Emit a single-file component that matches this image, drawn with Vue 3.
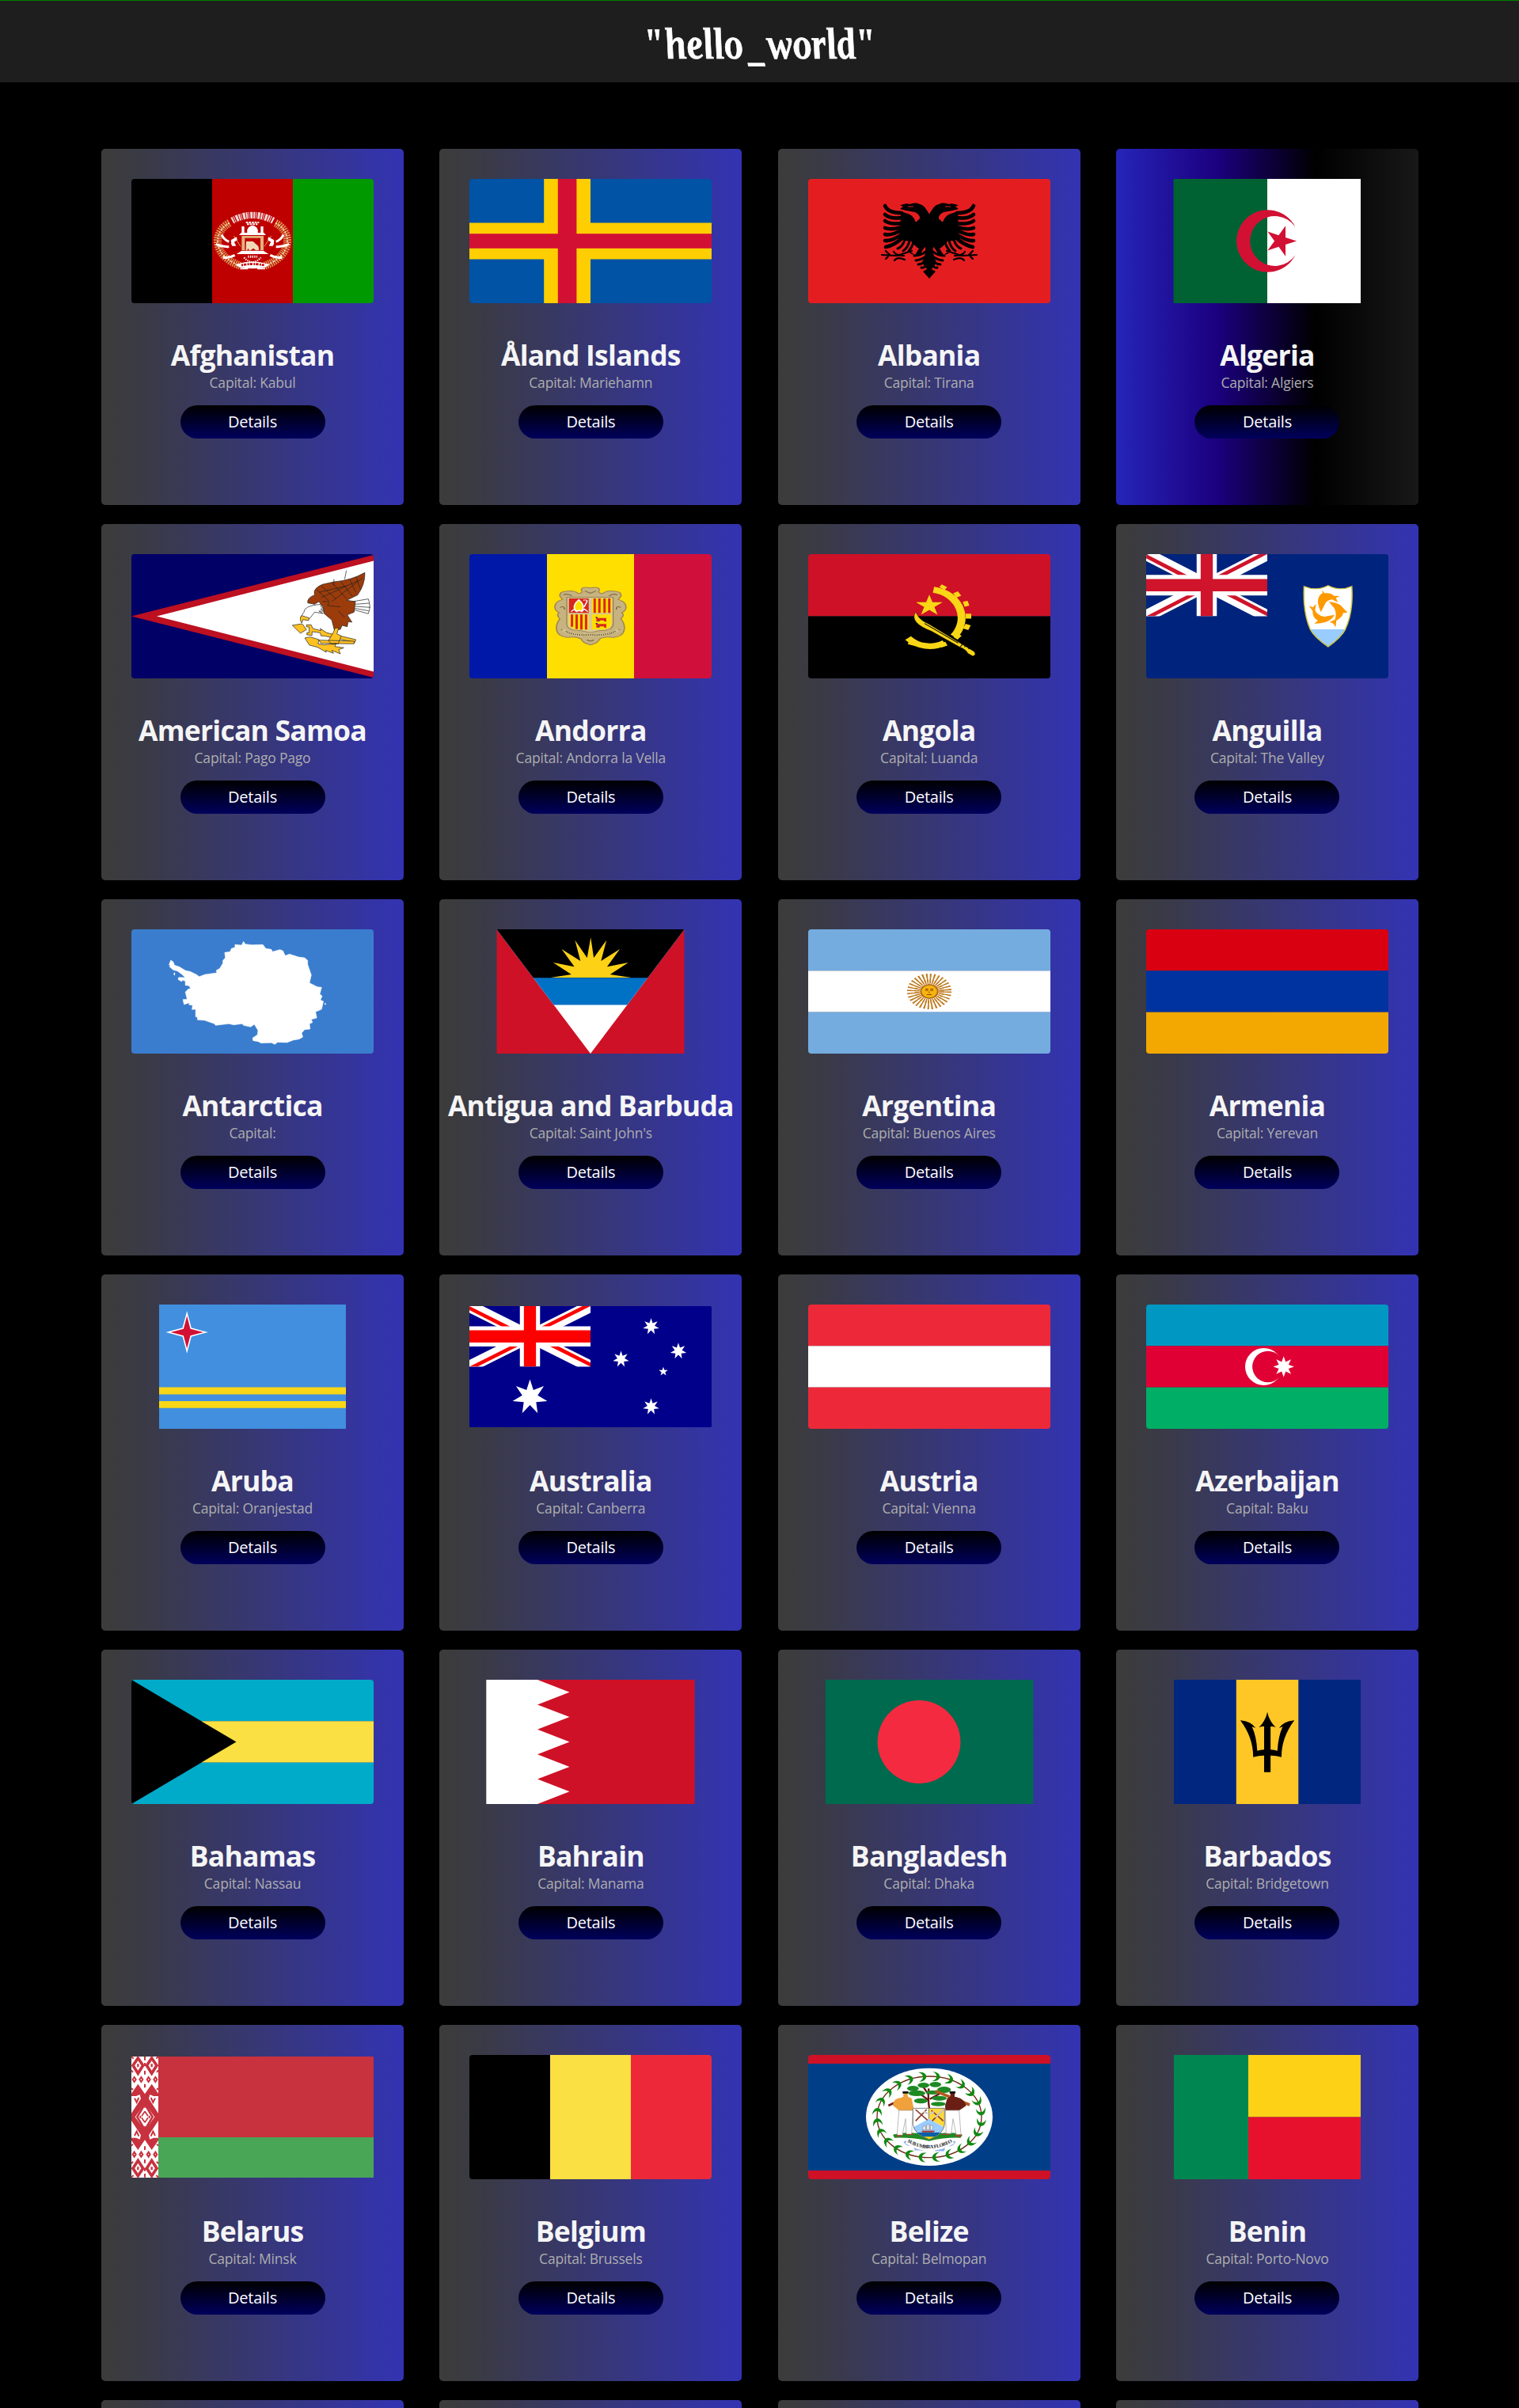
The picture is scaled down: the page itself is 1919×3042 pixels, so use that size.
<script setup>
const stripes = (dir, ...colors) => {
  const n = colors.length
  return colors.map((c, i) =>
    dir === 'v'
      ? { x: (306 / n) * i, y: 0, w: 306 / n, h: 157, c }
      : { x: 0, y: (157 / n) * i, w: 306, h: 157 / n, c }
  )
}

const star = (cx, cy, n, R, r, rot = -90, sx = 1) => {
  const pts = []
  for (let i = 0; i < n * 2; i++) {
    const a = ((rot + (i * 180) / n) * Math.PI) / 180
    const k = i % 2 ? r : R
    pts.push(`${(cx + Math.cos(a) * k * sx).toFixed(2)},${(cy + Math.sin(a) * k).toFixed(2)}`)
  }
  return pts.join(' ')
}

const zigzag = () => {
  let d = 'M86 0'
  for (let i = 1; i <= 10; i++) d += `L${i % 2 ? 126.5 : 86} ${(i * 15.7).toFixed(1)}`
  return d + 'H284.6V0Z'
}

const leaves = Array.from({ length: 24 }, (_, i) => {
  const a = ((i + 0.5) / 24) * Math.PI * 2
  return {
    x: 522 + 198 * Math.cos(a),
    y: 283 + 154 * Math.sin(a),
    r: (Math.atan2(154 * Math.cos(a), -198 * Math.sin(a)) * 180) / Math.PI
  }
})

const southernCross = [
  star(76.5, 117, 7, 22.5, 10),
  star(229.5, 27.7, 7, 10.5, 4.7),
  star(264, 58.7, 7, 10.5, 4.7),
  star(191.5, 69, 7, 10.5, 4.7),
  star(229.5, 129, 7, 10.5, 4.7),
  star(245, 84.7, 5, 6, 2.4)
]

const countries = [
  { name: 'Afghanistan', capital: 'Kabul', bars: stripes('v', '#000', '#bf0000', '#009900') },
  { name: 'Åland Islands', capital: 'Mariehamn', bars: stripes('h', '#0053a5') },
  { name: 'Albania', capital: 'Tirana', bars: stripes('h', '#e41e20') },
  { name: 'Algeria', capital: 'Algiers', active: true },
  { name: 'American Samoa', capital: 'Pago Pago', bars: stripes('h', '#000066') },
  {
    name: 'Andorra',
    capital: 'Andorra la Vella',
    bars: [
      { x: 0, y: 0, w: 98, h: 157, c: '#0018a8' },
      { x: 98, y: 0, w: 110, h: 157, c: '#ffdf00' },
      { x: 208, y: 0, w: 98, h: 157, c: '#d0103a' }
    ]
  },
  { name: 'Angola', capital: 'Luanda', bars: stripes('h', '#ce1126', '#000') },
  { name: 'Anguilla', capital: 'The Valley', bars: stripes('h', '#00247d') },
  { name: 'Antarctica', capital: '', bars: stripes('h', '#3a7dce') },
  { name: 'Antigua and Barbuda', capital: "Saint John's" },
  { name: 'Argentina', capital: 'Buenos Aires', bars: stripes('h', '#74acdf', '#fff', '#74acdf') },
  { name: 'Armenia', capital: 'Yerevan', bars: stripes('h', '#d90012', '#0033a0', '#f2a800') },
  { name: 'Aruba', capital: 'Oranjestad' },
  { name: 'Australia', capital: 'Canberra' },
  { name: 'Austria', capital: 'Vienna', bars: stripes('h', '#ed2939', '#fff', '#ed2939') },
  { name: 'Azerbaijan', capital: 'Baku', bars: stripes('h', '#0098c3', '#e00034', '#00ae65') },
  { name: 'Bahamas', capital: 'Nassau', bars: stripes('h', '#00abc9', '#fae042', '#00abc9') },
  { name: 'Bahrain', capital: 'Manama' },
  { name: 'Bangladesh', capital: 'Dhaka' },
  { name: 'Barbados', capital: 'Bridgetown' },
  { name: 'Belarus', capital: 'Minsk' },
  { name: 'Belgium', capital: 'Brussels', bars: stripes('v', '#000', '#fae042', '#ed2939') },
  { name: 'Belize', capital: 'Belmopan', bars: stripes('h', '#003f87') },
  { name: 'Benin', capital: 'Porto-Novo' }
]
</script>

<template>
  <div class="page">
    <header class="topbar">
      <h1 class="logo">"hello<span class="dash">_</span>world"</h1>
    </header>

    <main class="grid">
      <article v-for="c in countries" :key="c.name" class="card" :class="{ active: c.active }">
        <svg class="flag" viewBox="0 0 306 157" width="306" height="157">
          <rect v-for="(b, i) in c.bars" :key="i" :x="b.x" :y="b.y" :width="b.w" :height="b.h" :fill="b.c" />

          <g v-if="c.name === 'Afghanistan'" transform="scale(.33333) translate(-168 -168)">
            <g fill="none">
              <path d="M540 335C480 365 468 455 580 497M714 335C774 365 786 455 674 497" stroke="#d9924f" stroke-width="30" stroke-dasharray="5 3" />
              <path d="M540 335C480 365 468 455 580 497M714 335C774 365 786 455 674 497" stroke="#f4dcc0" stroke-width="5" stroke-dasharray="7 5" />
              <path d="M550 326Q627 285 706 326" stroke="#fff" stroke-width="25" stroke-dasharray="6 3 3 4 9 3" opacity=".85" />
              <path d="M602 333h50M606 340h40" stroke="#fff" stroke-width="6" stroke-dasharray="8 3" />
              <path d="M510 380q10 20 28 26M488 415q25 12 50 10M515 465q20 5 45-8M744 380q-10 20-28 26M766 415q-25 12-50 10M739 465q-20 5-45-8" stroke="#fff" stroke-width="9" />
              <path d="M556 384l26 40M698 384l-26 40" stroke="#e0a060" stroke-width="3" />
              <path d="M595 466q15 16 32 18q17-2 32-18" stroke="#fff" stroke-width="7" stroke-dasharray="4 4" />
              <path d="M610 463h35" stroke="#fff" stroke-width="9" stroke-dasharray="4 4" />
            </g>
            <g fill="#fff">
              <path d="M545 400l22-12 2 12-22 14zM545 412l12-6 8 16h-15zM709 400l-22-12-2 12 22 14zM709 412l-12-6-8 16h15z" />
              <path d="M586 348h10v28h-10zM658 348h10v28h-10zM584 372h86l8 9h-102z" />
              <path d="M607 372q-4-22 20-28q24 6 20 28z" />
              <path d="M566 453l20-13h82l20 13z" />
              <path d="M562 494q65-25 130 0l-18 10q-47 8-94 0z" />
              <path d="M580 508h30M645 508h30" stroke="#fff" stroke-width="5" />
            </g>
            <path d="M586 384h12v54h-12zM657 384h12v54h-12zM598 384h59v8h-59z" fill="#e3b27c" />
            <path d="M603 405h26l20 18 3 14-12 2-10-8-10 8h-6l-3-8-4 8h-5z" fill="#f1d9b5" />
            <path d="M585 495q42-9 86 0" fill="none" stroke="#bf0000" stroke-width="8" stroke-dasharray="6 3 10 4" />
          </g>

          <g v-else-if="c.name === 'Åland Islands'">
            <path d="M94.2 0H153V55.4H306V101.6H153V157H94.2V101.6H0V55.4H94.2Z" fill="#ffce00" />
            <path d="M111.8 0H135.4V69.3H306V87.7H135.4V157H111.8V87.7H0V69.3H111.8Z" fill="#d21034" />
          </g>

          <g v-else-if="c.name === 'Albania'">
            <g v-for="m in [1, -1]" :key="m" :transform="m < 0 ? 'translate(306 0) scale(-1 1)' : ''">
              <path d="M153.3 45C150 40 147 33 141 32C135 29 131 31 128 32C124 30 120 33 116 33L120 35L116 38L124 40C128 41 131 41 135 42C141 45 143 50 139 52L136 54C133 49 132 46 126 44L117 41L116 72C118 77 122 79 129 78C133 82 136 86 140 88L135 96L126 90L130 95L142 97C143 92 146 87 148 86C149 94 146 100 144 106L150 114L145 117L153.3 126Z" fill="#000" />
              <g stroke="#000" fill="none" stroke-linecap="round" stroke-width="4.6">
                <path d="M97 34Q101 43 118 43M97 45Q104 51 118 49M97 53Q104 58 118 56M97 62Q104 65 118 61M97 70Q104 72 118 65M97 78Q106 79 120 69M98 86Q109 84 121 73" />
                <path d="M113 88Q119 86 122 77M120 91Q126 87 128 78M127 91Q131 87 133 80" stroke-width="3" />
                <path d="M148 92Q143 97 134 97M147 99Q143 102 136 103M147 105Q143 108 139 108M148 110Q146 113 143 112" stroke-width="3" />
                <path d="M93 96L112 97L131 91M98 91L103 96L98 101M108 92Q111 97 121 97M109 103Q113 98 122 102" stroke-width="2.2" />
              </g>
              <path d="M126 35h7" stroke="#e41e20" stroke-width="1" />
              <path d="M131 44.5C136 45 139 48 136.5 52.5" stroke="#e41e20" stroke-width="3" stroke-linecap="round" fill="none" />
            </g>
          </g>

          <g v-else-if="c.name === 'Algeria'">
            <path d="M34.5 0H153V157H34.5Z" fill="#006233" />
            <path d="M153 0H271V157H153Z" fill="#fff" />
            <path d="M188.3 96.5A39.25 39.25 0 1 1 188.3 60.5A31.4 31.4 0 1 0 188.3 96.5Z" fill="#d21034" />
            <polygon :points="star(169.8, 78.5, 5, 20.3, 7.7, 0)" fill="#d21034" />
          </g>

          <g v-else-if="c.name === 'American Samoa'">
            <path d="M0 78.5L306 1V156Z" fill="#bd1021" />
            <path d="M32 78.5L306 8.5V148.5Z" fill="#fff" />
            <g transform="scale(.5421 .33333) translate(-103 -60)" stroke="#222" stroke-width="1.6" stroke-linejoin="round">
              <path d="M618 240L655 230Q662 258 655 286L620 270M624 250L658 246M624 258L660 262M622 265L656 275" fill="#fff" />
              <path d="M647 130Q648 175 630 215L605 235L625 240L622 280L606 290L617 318L608 316L606 335L594 330L590 345L576 348L570 310L552 285L550 262L540 240L530 250L514 245Q512 225 530 215Q525 190 548 175L575 165Q615 160 647 130Z" fill="#9c3c0b" />
              <path d="M570 168L605 230M590 162L618 220M612 156L626 205M627 148L636 190M545 180L580 230M535 195L565 240M540 205L605 180M545 225L632 160M570 240L642 150M548 240Q570 235 560 255L590 260M585 275L600 300M604 122L600 155M575 155V180" fill="none" />
              <path d="M545 250Q505 255 505 280L497 300L518 305L530 280L550 285L540 276L552 276L544 268L552 266L545 260Z" fill="#fff" />
              <path d="M500 293L517 302L516 312L503 308L500 321Q493 305 500 293Z" fill="#ffc221" />
              <path d="M478 330L501 324L511 346L497 360ZM511 328L522 328L526 342L545 350L543 342L558 358L626 384L624 394L552 370L545 370L543 358L524 354V368L512 366V358H517V336H511Z" fill="#ffc221" />
              <path d="M578 340L586 340L582 362L592 370L585 400L570 402L562 388L572 362ZM540 386L622 390V400L545 398ZM507 378L520 374L540 384L538 400L552 404L580 398L577 410L598 415L586 422L590 438L570 425L574 436L556 425L557 432L537 413L518 405Z" fill="#ffc221" />
            </g>
          </g>

          <g v-else-if="c.name === 'Andorra'" transform="scale(.5421 .33333) translate(-891 -60)">
            <path d="M1173 188Q1150 182 1152 198Q1158 205 1145 210Q1135 195 1112 202Q1100 205 1102 220L1108 232Q1090 240 1090 262Q1092 275 1100 282Q1092 290 1102 305Q1092 325 1094 345Q1096 372 1120 376Q1140 370 1152 382Q1152 395 1173 404Q1194 395 1194 382Q1206 370 1226 376Q1250 372 1252 345Q1254 325 1244 305Q1254 290 1246 282Q1256 275 1256 262Q1256 240 1238 232L1244 220Q1246 205 1234 202Q1211 195 1201 210Q1188 205 1194 198Q1196 182 1173 188Z" fill="#c7b37f" stroke="#a08554" stroke-width="3" />
            <path d="M1160 200l13 8 13-8M1110 215q10-8 20 4M1236 215q-10-8-20 4M1102 262q12-8 10 8M1244 262q-12-8-10 8M1105 345q8 12 20 10M1241 345q-8 12-20 10M1165 385q8 8 16 0" fill="none" stroke="#806841" stroke-width="3" />
            <path d="M1118 224H1226V325Q1226 350 1195 350L1173 357L1150 350Q1118 350 1118 325Z" fill="#d8c896" stroke="#8d7444" stroke-width="2" />
            <path d="M1123 228H1169V283H1123Z" fill="#d8271c" />
            <path d="M1177 228H1222V283H1177ZM1124 289H1169V346H1145Q1124 344 1124 325ZM1177 289H1222V325Q1222 344 1200 346H1177Z" fill="#ffdf00" />
            <path d="M1183 228v55M1194 228v55M1206 228v55M1217 228v55M1130 289v46M1141 289v55M1152 289v57M1163 289v57" stroke="#d8271c" stroke-width="5.5" />
            <path d="M1146 233Q1130 255 1138 275H1153Q1162 255 1146 233Z" fill="#ffdf00" stroke="#fff" stroke-width="3" />
            <path d="M1128 278l8-10 5 10 6-6 6 6 6-10 8 10M1156 235q12-5 8 8l-6 18" fill="none" stroke="#fff" stroke-width="3" />
            <path d="M1184 297l6 5h20v14h-4l-2-5h-10l-3 5h-4v-10zM1184 320l6 5h20v14h-4l-2-5h-10l-3 5h-4v-10z" fill="#d8271c" />
            <path d="M1186 300h4M1186 323h4M1192 313h3M1192 336h3" stroke="#0018a8" stroke-width="3" />
            <path d="M1110 346Q1125 370 1173 366Q1221 370 1237 346" fill="none" stroke="#d3c290" stroke-width="10" />
            <path d="M1116 352Q1130 369 1173 366Q1216 369 1231 352" fill="none" stroke="#5e4a28" stroke-width="6" stroke-dasharray="2 3" />
          </g>

          <g v-else-if="c.name === 'Angola'">
            <g transform="scale(.43365 .33333) translate(229 -60)">
              <g fill="none" stroke="#f9d616">
                <path d="M136 195A96 108 0 0 1 195 372" stroke-width="23" />
                <path d="M62 378A90 108 0 0 0 168 396" stroke-width="22" />
                <path d="M161 190l7-10M198 217l14-8M224 250l14-4M230 295h16M226 333l15 6M200 367l12 10M74 392l-4 12M124 402v14M162 396l6 14" stroke-width="19" />
              </g>
              <path d="M84 280L92 297Q100 312 122 325L255 430Q262 445 250 446L236 436Q232 422 212 412L130 352Q65 320 84 280Z" fill="#f9d616" stroke="#000" stroke-width="1" />
              <path d="M110 323L208 397M214 412l8-12M226 412l3-3M238 420l2-3" stroke="#000" stroke-width="2.5" fill="none" />
            </g>
            <polygon :points="star(153, 65.2, 5, 14, 5.4, -90, 1.26)" fill="#f9d616" />
          </g>

          <g v-else-if="c.name === 'Anguilla'">
            <svg x="0" y="0" width="153" height="78.5" viewBox="0 0 60 30" preserveAspectRatio="none">
              <path d="M0 0L60 30M60 0L0 30" stroke="#fff" stroke-width="6" />
              <path d="M0 0L30 15V17.3L0 2ZM60 30L30 15V12.7L60 28ZM0 30H4L30 17V15ZM60 0H56L30 13V15Z" fill="#cf142b" />
              <path d="M30 0V30M0 15H60" stroke="#fff" stroke-width="10" />
              <path d="M30 0V30M0 15H60" stroke="#cf142b" stroke-width="6" />
            </svg>
            <g transform="scale(.43365 .33333) translate(-756 -60)">
              <path d="M1216 182Q1252 202 1286 179Q1320 202 1355 182Q1360 280 1336 345Q1325 375 1286 411Q1246 375 1234 345Q1212 280 1216 182Z" fill="#fff" />
              <path d="M1233 345H1338Q1325 375 1286 411Q1246 375 1233 345Z" fill="#9cf" />
              <path d="M1216 182Q1252 202 1286 179Q1320 202 1355 182Q1360 280 1336 345Q1325 375 1286 411Q1246 375 1234 345Q1212 280 1216 182Z" fill="none" stroke="#cfc43a" stroke-width="3.5" />
              <g fill="#ff9900">
                <path d="M1269 196L1275 208Q1295 205 1303 218L1321 219L1309 226L1314 243L1298 232Q1280 235 1276 252L1265 280Q1254 250 1257 230Q1260 215 1270 208Z" />
                <path d="M1288 240Q1320 245 1328 262L1343 282L1330 283Q1328 300 1310 312L1308 337L1300 322L1290 318L1306 308Q1312 285 1304 265Z" />
                <path d="M1230 256L1242 262L1251 248L1248 272Q1254 292 1275 297L1305 290Q1295 315 1265 322L1246 324L1256 312Q1240 300 1241 275Z" />
              </g>
            </g>
          </g>

          <g v-else-if="c.name === 'Antarctica'" transform="scale(.7653 .33333) translate(-21 -72)">
            <path d="M206 118L209 128L220 131L238 130L243 145L252 148L254 157L266 149L271 153L275 172L282 166L297 177L307 180L312 190V205L316 232L318 245L315 275L328 290L335 292L332 318L336 325L333 340L338 345L335 375L325 385L327 408L318 413L320 425L315 430L316 450L307 452L302 465L304 480L298 488L288 492L278 501L262 500L258 508L252 502L235 503L230 497L222 494L221 484L229 472L230 455L226 440L224 432L218 442L206 436L204 430L190 434L182 430L160 436L158 430L142 417L130 415V405L127 403V375L121 376L122 360L116 358L117 350L108 357L106 338L113 337L110 310L115 298L119 296L116 286L110 284V268L105 265L104 270L98 262L99 254L110 255L104 242L97 230L90 226L84 214L85 205L83 207L86 189L90 195L92 208L100 214L110 228L118 232L128 243L133 251L143 243L162 237L161 228L167 220L172 200L172 190L176 180L175 160L184 157L186 145L192 140V130L203 132Z" fill="#fff" stroke="#fff" stroke-width="1" />
            <path d="M92 236v10M341 352v6" stroke="#fff" stroke-width="2" />
          </g>

          <g v-else-if="c.name === 'Antigua and Barbuda'">
            <path d="M34.5 0H271.5V157H34.5Z" fill="#ce1126" />
            <path d="M34.5 0H271.5L153 157Z" fill="#fff" />
            <path d="M34.5 0H271.5L199.4 95.5H106.6Z" fill="#0072c6" />
            <path d="M34.5 0H271.5L225.2 61.3H80.8Z" fill="#000" />
            <polygon transform="scale(.7653 .33333) translate(-578.7 -72)" points="713,255 747,243 717,198 752,214 731,147 762,192 753,113 773,180 779,103 784,180 805,113 796,192 827,147 806,214 841,198 811,243 846,255" fill="#fcd116" />
          </g>

          <g v-else-if="c.name === 'Argentina'" fill="none">
            <g transform="translate(153 78.5) scale(1.25 1)">
              <circle r="16" stroke="#c0791c" stroke-width="13" stroke-dasharray="1.3 1.842" />
              <circle r="12.5" stroke="#c0791c" stroke-width="5" stroke-dasharray="1.3 1.15" />
              <circle r="8.6" stroke="#b06a14" stroke-width="1.6" fill="#f6b40e" />
              <path d="M-4 -3h3M1 -3h3M-4 -1.3h3M1 -1.3h3M0 0v2M-2.5 4h5" stroke="#85340a" stroke-width=".8" />
            </g>
          </g>

          <g v-else-if="c.name === 'Aruba'">
            <path d="M35 0H271V157H35Z" fill="#418fde" />
            <path d="M35 104.6H271V113.6H35ZM35 122H271V130.8H35Z" fill="#f9d616" />
            <polygon :points="star(70.2, 35, 4, 23.6, 7)" fill="#d21034" stroke="#fff" stroke-width="1.6" />
          </g>

          <g v-else-if="c.name === 'Australia'">
            <rect y="2" width="306" height="153" rx="1.5" fill="#00008b" />
            <svg x="0" y="2" width="153" height="76.5" viewBox="0 0 60 30" preserveAspectRatio="none">
              <path d="M0 0L60 30M60 0L0 30" stroke="#fff" stroke-width="6" />
              <path d="M0 0L30 15V17.3L0 2ZM60 30L30 15V12.7L60 28ZM0 30H4L30 17V15ZM60 0H56L30 13V15Z" fill="#f00" />
              <path d="M30 0V30M0 15H60" stroke="#fff" stroke-width="10" />
              <path d="M30 0V30M0 15H60" stroke="#f00" stroke-width="6" />
            </svg>
            <polygon v-for="p in southernCross" :key="p" :points="p" fill="#fff" />
          </g>

          <g v-else-if="c.name === 'Azerbaijan'">
            <circle cx="148.5" cy="78.5" r="23.5" fill="#fff" />
            <circle cx="153.8" cy="78.5" r="19.7" fill="#e00034" />
            <polygon :points="star(173.7, 78.5, 8, 13.2, 6.6)" fill="#fff" />
          </g>

          <path v-else-if="c.name === 'Bahamas'" d="M0 0L132.5 78.5L0 157Z" fill="#000" />

          <g v-else-if="c.name === 'Bahrain'">
            <path d="M21.3 0H130V157H21.3Z" fill="#fff" />
            <path :d="zigzag()" fill="#ce1126" />
          </g>

          <g v-else-if="c.name === 'Bangladesh'">
            <path d="M21.8 0H284.4V157H21.8Z" fill="#006a4e" />
            <circle cx="140" cy="78.5" r="52.4" fill="#f42a41" />
          </g>

          <g v-else-if="c.name === 'Barbados'">
            <path d="M35 0H271V157H35Z" fill="#00267f" />
            <path d="M113.8 0H192.3V157H113.8Z" fill="#ffc726" />
            <g transform="scale(.5102 .33333) translate(-878 -66)">
              <path v-for="m in [1, -1]" :key="m" :transform="m < 0 ? 'translate(2356 0) scale(-1 1)' : ''" d="M1178.5 188Q1172 225 1157 247Q1163 242 1170 243V331Q1161 332 1153 335Q1151 280 1140 244L1149 249Q1138 224 1111 220Q1143 285 1143 359Q1157 353 1170 353V416H1178.5Z" fill="#000" />
            </g>
          </g>

          <g v-else-if="c.name === 'Belarus'">
            <path d="M34 2H306V104H34Z" fill="#c8313e" />
            <path d="M34 104H306V155H34Z" fill="#4aa657" />
            <path d="M0 2H34V155H0Z" fill="#fff" />
            <g transform="translate(0 2) scale(.33333)" fill="none" stroke="#c8313e">
              <g v-for="m in [1, -1]" :key="m" :transform="m < 0 ? 'translate(0 458) scale(1 -1)' : ''">
                <path d="M25 6L44 34L25 64L6 34ZM77 6L96 34L77 64L58 34Z" stroke-width="11" />
                <path d="M25 28v12M77 28v12" stroke-width="7" />
                <path d="M51 0v14M51 24v12M51 54v14M51 104v14M0 0l8 8M102 0l-8 8M0 52l6 8M102 52l-6 8M0 120l6 6M102 120l-6 6" stroke-width="6" />
                <path d="M11 78l6 9-6 9-6-9zM37 78l6 9-6 9-6-9zM65 78l6 9-6 9-6-9zM91 78l6 9-6 9-6-9z" stroke-width="6" />
                <path d="M25 104L51 142L77 104L102 140V150H84L70 144L66 160L102 215V240H96L51 178L6 240H0V215L36 160L32 144L18 150H0V140Z" fill="#c8313e" stroke="none" />
                <path d="M12 158l8 16 8-18M90 158l-8 16-8-18" stroke-width="6" />
                <path d="M51 208l12 18M51 208l-12 18M51 184v10M34 224v8M68 224v8" stroke-width="5" />
              </g>
              <path d="M51 180L80 229L51 278L22 229Z" stroke-width="8" />
            </g>
          </g>

          <g v-else-if="c.name === 'Belize'">
            <path d="M0 0H306V11H0ZM0 146H306V157H0Z" fill="#ce1126" />
            <g transform="scale(.33333) translate(-63 -48)">
              <ellipse cx="522" cy="283" rx="240" ry="185" fill="#fff" />
              <ellipse cx="522" cy="283" rx="198" ry="154" fill="none" stroke="#6b2c12" stroke-width="4" />
              <path v-for="(l, i) in leaves" :key="i" :transform="`translate(${l.x} ${l.y}) rotate(${l.r})`" d="M-14 -18Q12 -18 15 0Q12 18 -14 18Q2 11 2 0Q2 -11 -14 -18Z" fill="#0f8a12" />
              <path d="M522 250Q516 215 520 175M520 220L480 190M524 215L570 190M520 200L500 170" stroke="#6b1410" stroke-width="7" fill="none" />
              <g fill="#1f8a24">
                <ellipse cx="500" cy="163" rx="22" ry="10" /><ellipse cx="545" cy="160" rx="22" ry="10" />
                <ellipse cx="460" cy="175" rx="22" ry="10" /><ellipse cx="578" cy="180" rx="26" ry="12" />
                <ellipse cx="475" cy="193" rx="32" ry="11" /><ellipse cx="535" cy="190" rx="26" ry="8" />
                <ellipse cx="490" cy="222" rx="26" ry="10" /><ellipse cx="560" cy="212" rx="28" ry="9" />
                <ellipse cx="556" cy="234" rx="28" ry="8" />
                <path d="M384 350Q440 335 522 352Q600 335 648 350L640 362Q580 360 522 374Q460 360 390 362Z" />
              </g>
              <path d="M367 240L440 205" stroke="#70201a" stroke-width="8" />
              <path d="M545 185L675 237" stroke="#b45a1e" stroke-width="11" />
              <path d="M415 210Q385 212 384 240L400 252L405 258H460L462 245L455 212L440 206V190H424V206Z" fill="#f0a13c" />
              <path d="M626 208Q655 215 662 240L645 252L635 258H583L582 240L590 212L602 206V190H618V206Z" fill="#6b1f14" />
              <path d="M421 194V186H443V194ZM599 194V186H621V194Z" fill="#111" />
              <path d="M407 258H460L455 350H435L432 290L420 352H400ZM583 258H635L642 350H624L612 290L605 346H586Z" fill="#fff" stroke="#999" stroke-width="2" />
              <path d="M398 352h20v6h-20zM432 347h30v4h-30zM570 347h30v4h-30zM622 350h22v8h-22z" fill="#a2462a" />
              <path d="M460 250H580V310Q575 352 522 368Q466 352 460 310Z" fill="#fff" />
              <path d="M520 250H580V322L520 290Z" fill="#ffd83c" />
              <path d="M462 322L520 290L578 322Q572 335 565 343H475Q464 332 462 322Z" fill="#9cf" />
              <path d="M475 342H565Q545 362 522 367Q495 360 475 342Z" fill="#0a5fa5" />
              <path d="M500 358H544L522 368Z" fill="#fd0" />
              <path d="M460 250H580V310Q575 352 522 368Q466 352 460 310ZM520 250V290" fill="none" stroke="#666" stroke-width="2.5" />
              <path d="M470 255l45 40M512 255l-42 43M530 258l45 40M575 255l-42 43" stroke="#8a3b2a" stroke-width="5" />
              <path d="M500 262l16 8M540 262l-14 10M545 285l30-30" stroke="#ccc" stroke-width="7" />
              <path d="M492 335h52l-6 6h-42z" fill="#a33" />
              <path d="M498 318h10v14h-10zM512 312h10v20h-10zM526 315h9v17h-9z" fill="#eee" stroke="#777" stroke-width="1.5" />
              <path d="M428 375Q440 395 465 385L470 405H497L500 395H545L548 408H575L580 388Q610 395 618 375" fill="none" stroke="#8fb2ef" stroke-width="9" />
              <path id="motto" d="M436 376Q480 404 524 402Q570 402 612 376" fill="none" stroke="#fff" stroke-width="17" />
              <text font-family="Liberation Serif, serif" font-weight="700" font-size="19" fill="#222"><textPath href="#motto" startOffset="2" textLength="182">SUB UMBRA FLOREO</textPath></text>
            </g>
          </g>

          <g v-else-if="c.name === 'Benin'">
            <path d="M35 0H129V157H35Z" fill="#008751" />
            <path d="M129 0H271V78.5H129Z" fill="#fcd116" />
            <path d="M129 78.5H271V157H129Z" fill="#e8112d" />
          </g>
        </svg>
        <h2 class="name">{{ c.name }}</h2>
        <p class="capital">Capital: {{ c.capital }}</p>
        <button class="details" type="button">Details</button>
      </article>
      <article v-for="n in 4" :key="n" class="card"></article>
    </main>
  </div>
</template>

<style>
body {
  margin: 0;
  background: #000;
}
</style>

<style scoped>
.page {
  height: 3042px;
  overflow: hidden;
  background: #000;
  font-family: "Open Sans", "Noto Sans", sans-serif;
}
.topbar {
  box-sizing: border-box;
  height: 104px;
  padding-top: 4px;
  border-top: 1px solid #008000;
  background: #1e1e1e;
  display: flex;
  justify-content: center;
  align-items: center;
}
.logo {
  margin: 0;
  color: #fff;
  font: italic 700 56px/60px "Liberation Serif", serif;
  -webkit-text-stroke: 0.6px #fff;
  transform: translateX(1px) scaleX(0.855) skewX(13deg);
}
.dash {
  display: inline-block;
  margin: 0 4px;
  transform: translateY(2px) scaleX(0.86);
}
.grid {
  width: 1664px;
  margin: 84px 0 0 128px;
  display: grid;
  grid-template-columns: repeat(4, 382px);
  justify-content: space-between;
  row-gap: 24px;
}
.card {
  box-sizing: border-box;
  height: 450px;
  padding-top: 38px;
  border-radius: 5px;
  background: linear-gradient(to right, #3c3c3a, #3a3a48 16%, #3333b3);
  display: flex;
  flex-direction: column;
  align-items: center;
}
.card.active {
  background: linear-gradient(to right, #2525b8, #1c0080 33%, #000 66%, #181818);
}
.flag {
  display: block;
  flex: none;
  border-radius: 4px;
  overflow: hidden;
}
.name {
  margin: 43px 0 0;
  color: #f5f5f5;
  font-size: 35.5px;
  font-weight: 700;
  line-height: 44px;
  letter-spacing: -0.78px;
  white-space: nowrap;
}
.capital {
  margin: 0;
  color: #adadad;
  font-size: 17.5px;
  line-height: 26px;
  letter-spacing: -0.2px;
}
.details {
  width: 183px;
  height: 42px;
  margin-top: 16px;
  padding: 0;
  border: 0;
  border-radius: 21px;
  background: linear-gradient(#000, #00005c);
  color: #fff;
  font: 400 20px/42px "Open Sans", "Noto Sans", sans-serif;
  letter-spacing: -0.25px;
}
</style>
